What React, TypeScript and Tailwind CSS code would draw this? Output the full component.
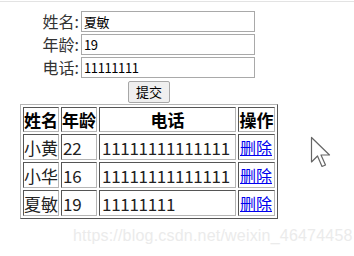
const font = { fontFamily: '"Noto Sans CJK SC", "Noto Sans", sans-serif' }

const rows = [
  { name: "小黄", age: "22", phone: "11111111111111" },
  { name: "小华", age: "16", phone: "11111111111111" },
  { name: "夏敏", age: "19", phone: "11111111" },
]

const cell =
  "h-[25px] px-0 py-px border border-t-[#555] border-l-[#555] border-r-[#b5b5b5] border-b-[#b5b5b5] whitespace-nowrap overflow-hidden"

function Field({ label, value }: { label: string; value: string }) {
  return (
    <div className="flex items-center h-[21px]">
      <span className="w-[63px] text-right text-[16px] leading-[21px] text-[#333] pr-[2px]">{label}</span>
      <div className="w-[174px] h-[21px] border border-[#a9a9a9] bg-white pl-[2px] text-[13px] leading-[19px] text-black tracking-[-0.4px]">
        {value}
      </div>
    </div>
  )
}

export default function App() {
  return (
    <div className="relative w-[354px] h-[256px] bg-white overflow-hidden" style={font}>
      <div className="mt-px h-px bg-[#e3e3e3]" />

      <div className="mt-[9px] pl-[18px] flex flex-col gap-[2px]">
        <Field label="姓名:" value="夏敏" />
        <Field label="年龄:" value="19" />
        <Field label="电话:" value="11111111" />
      </div>

      <div className="pl-[128px]">
        <button className="w-[42px] h-[22px] bg-[#efefef] border border-[#a7a7a7] rounded-[2px] text-[13px] leading-[18px] text-black">
          提交
        </button>
      </div>

      <table className="mt-px ml-[20px] w-[257px] table-fixed border-separate border-spacing-[2px] border border-t-[#b5b5b5] border-l-[#b5b5b5] border-r-[#555] border-b-[#555] text-[17px] leading-[21px] text-[#222]">
        <thead>
          <tr>
            <th className={cell + " w-[36px] font-bold text-black"}>姓名</th>
            <th className={cell + " w-[36px] font-bold text-black"}>年龄</th>
            <th className={cell + " w-[137px] font-bold text-black"}>电话</th>
            <th className={cell + " w-[37px] font-bold text-black"}>操作</th>
          </tr>
        </thead>
        <tbody>
          {rows.map((r, idx) => (
            <tr key={idx}>
              <td className={cell}>{r.name}</td>
              <td className={cell + " pl-px tracking-[-0.3px]"}>{r.age}</td>
              <td className={cell + " pl-[2px] tracking-[-0.3px]"}>{r.phone}</td>
              <td className={cell + " pl-px"}>
                <a href="#" className="text-[16px] text-[#0000ee] underline">删除</a>
              </td>
            </tr>
          ))}
        </tbody>
      </table>

      <svg className="absolute left-[310px] top-[136px]" width="22" height="34" viewBox="0 0 22 34">
        <path
          d="M1.5 1.5 L1.5 26 L7.5 20 L12 30.5 L15.5 29 L11 19 L19.5 19 Z"
          fill="#fff"
          stroke="#666"
          strokeWidth="1.2"
          strokeLinejoin="round"
        />
      </svg>

      <div
        className="absolute left-[73px] top-[227px] text-[16px] leading-[18px] tracking-[0.2px] text-[#ebebeb] whitespace-nowrap"
        style={{ fontFamily: '"Liberation Sans", Arial, sans-serif' }}
      >
        https://blog.csdn.net/weixin_46474458
      </div>
    </div>
  )
}
